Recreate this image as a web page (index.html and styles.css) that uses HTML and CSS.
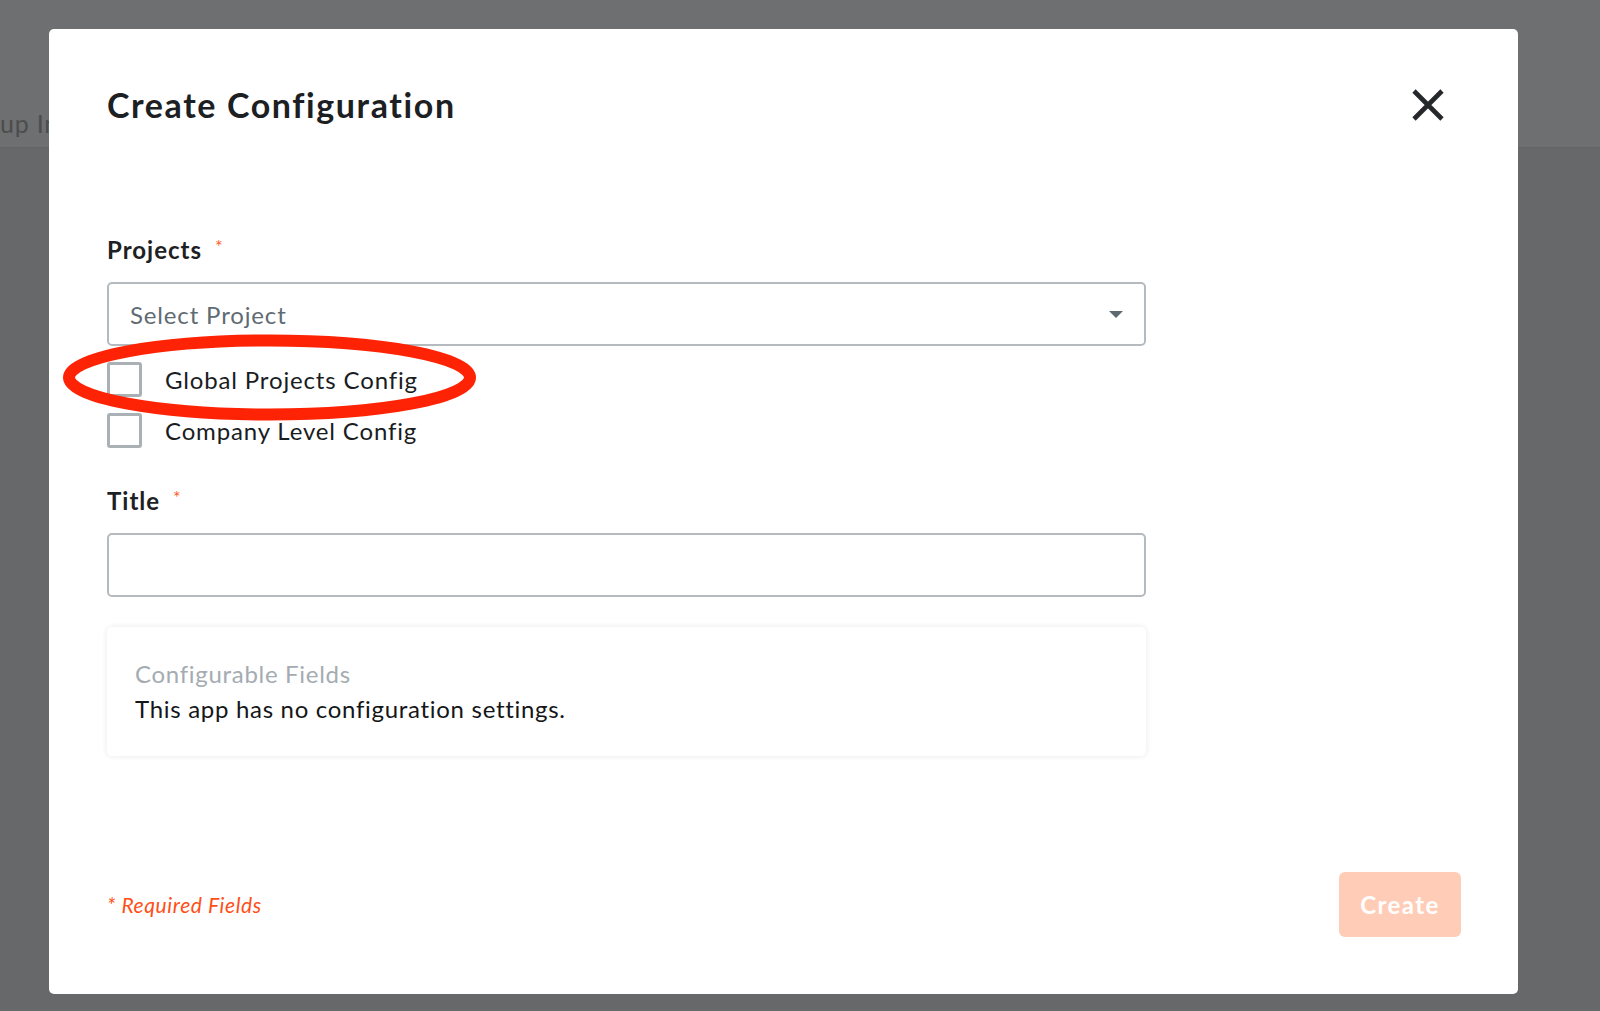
FILE: index.html
```html
<!DOCTYPE html>
<html lang="en">
<head>
<meta charset="utf-8">
<title>Create Configuration</title>
<link rel="stylesheet" href="styles.css">
</head>
<body>
<div class="page">
  <header class="page-header"><span class="page-title">up Integrations</span></header>
</div>
<div class="overlay">
  <div class="modal">
    <div class="modal-header">
      <h1 class="modal-title">Create Configuration</h1>
      <button class="close-btn" type="button" aria-label="Close">
        <svg width="32" height="32" viewBox="0 0 32 32"><path d="M2 2 L30 30 M30 2 L2 30" stroke="#25282b" stroke-width="4.6" fill="none"/></svg>
      </button>
    </div>
    <div class="modal-body">
      <div class="field-label">Projects<span class="req">*</span></div>
      <div class="select">
        <span class="placeholder">Select Project</span>
        <svg class="caret" width="14" height="7" viewBox="0 0 14 7"><polygon points="0,0 14,0 7,7" fill="#5f6a70"/></svg>
      </div>
      <div class="checks">
        <label class="check-row"><span class="checkbox"></span><span class="check-label">Global Projects Config</span></label>
        <label class="check-row"><span class="checkbox"></span><span class="check-label">Company Level Config</span></label>
      </div>
      <div class="field-label title-label">Title<span class="req">*</span></div>
      <div class="text-input"></div>
      <div class="card">
        <div class="card-title">Configurable Fields</div>
        <div class="card-text">This app has no configuration settings.</div>
      </div>
    </div>
    <div class="modal-footer">
      <span class="required-note">* Required Fields</span>
      <button class="create-btn" type="button">Create</button>
    </div>
  </div>
</div>
<svg class="annotation" width="1600" height="1011" viewBox="0 0 1600 1011">
  <ellipse cx="269.5" cy="377.5" rx="200.5" ry="37" fill="none" stroke="#ff2305" stroke-width="12"/>
</svg>
</body>
</html>
```

FILE: styles.css
```css
html, body {
  margin: 0;
  padding: 0;
  width: 1600px;
  height: 1011px;
  overflow: hidden;
}
body {
  background: #67686a;
  font-family: Lato, "Open Sans", sans-serif;
  font-variant-ligatures: none;
  position: relative;
}
.page-header {
  height: 147px;
  background: #6e6f70;
  border-bottom: 1px solid #636465;
  display: flex;
  align-items: flex-end;
}
.page-title {
  display: block;
  width: 49px;
  overflow: hidden;
  font-size: 25px;
  color: #4b4d4e;
  line-height: 30px;
  padding-bottom: 9px;
  letter-spacing: 0.8px;
  white-space: nowrap;
}
.overlay {
  position: absolute;
  inset: 0;
}
.modal {
  margin: 29px 0 0 49px;
  width: 1469px;
  height: 965px;
  box-sizing: border-box;
  background: #ffffff;
  border-radius: 5px;
  padding: 43px 57px 57px 58px;
  display: flex;
  flex-direction: column;
}
.modal-header {
  display: flex;
  align-items: center;
  justify-content: space-between;
  height: 66px;
}
.modal-title {
  margin: 0;
  font-size: 34px;
  line-height: 40px;
  font-weight: 700;
  letter-spacing: 1.6px;
  color: #1d2023;
}
.close-btn {
  width: 66px;
  height: 66px;
  border: none;
  background: none;
  padding: 0;
  display: flex;
  align-items: center;
  justify-content: center;
  cursor: pointer;
}
.modal-body {
  width: 1039px;
  display: flex;
  flex-direction: column;
  padding-top: 97px;
}
.field-label {
  font-size: 24px;
  line-height: 30px;
  height: 30px;
  font-weight: 700;
  letter-spacing: 1px;
  color: #1d2124;
}
.req {
  font-size: 18px;
  line-height: 1;
  font-weight: 400;
  color: #ff5a26;
  margin-left: 13px;
  position: relative;
  top: -6px;
}
.select {
  margin-top: 17px;
  height: 64px;
  box-sizing: border-box;
  border: 2px solid #b4babd;
  border-radius: 5px;
  display: flex;
  align-items: center;
  justify-content: space-between;
  padding: 0 21px 0 21px;
}
.placeholder {
  font-size: 24px;
  letter-spacing: 0.85px;
  color: #5f6b73;
}
.checks {
  margin-top: 16px;
  display: flex;
  flex-direction: column;
  gap: 16px;
}
.check-row {
  display: flex;
  align-items: center;
  gap: 23px;
  height: 35px;
}
.checkbox {
  width: 35px;
  height: 35px;
  box-sizing: border-box;
  border: 3px solid #aab1b5;
  border-radius: 3px;
}
.check-label {
  font-size: 24px;
  letter-spacing: 0.85px;
  color: #1a1d1f;
}
.title-label {
  margin-top: 38px;
}
.text-input {
  margin-top: 17px;
  height: 64px;
  box-sizing: border-box;
  border: 2px solid #b4babd;
  border-radius: 5px;
}
.card {
  margin-top: 30px;
  box-sizing: border-box;
  height: 129px;
  border-radius: 5px;
  background: #ffffff;
  box-shadow: 0 0 6px rgba(0, 0, 0, 0.09);
  padding: 29px 23px 30px 28px;
  font-size: 24px;
  line-height: 35px;
  letter-spacing: 0.7px;
}
.card-title {
  color: #a4acb1;
}
.card-text {
  color: #141618;
}
.modal-footer {
  margin-top: auto;
  display: flex;
  align-items: center;
  justify-content: space-between;
}
.required-note {
  font-size: 21px;
  font-style: italic;
  letter-spacing: 0.6px;
  color: #ff4f17;
}
.create-btn {
  width: 122px;
  height: 65px;
  border: none;
  border-radius: 6px;
  background: #ffcdb7;
  color: #ffffff;
  font-family: Lato, "Open Sans", sans-serif;
  font-size: 24px;
  font-weight: 700;
  letter-spacing: 1.4px;
  padding: 0;
}
.annotation {
  position: absolute;
  left: 0;
  top: 0;
  pointer-events: none;
}
```
